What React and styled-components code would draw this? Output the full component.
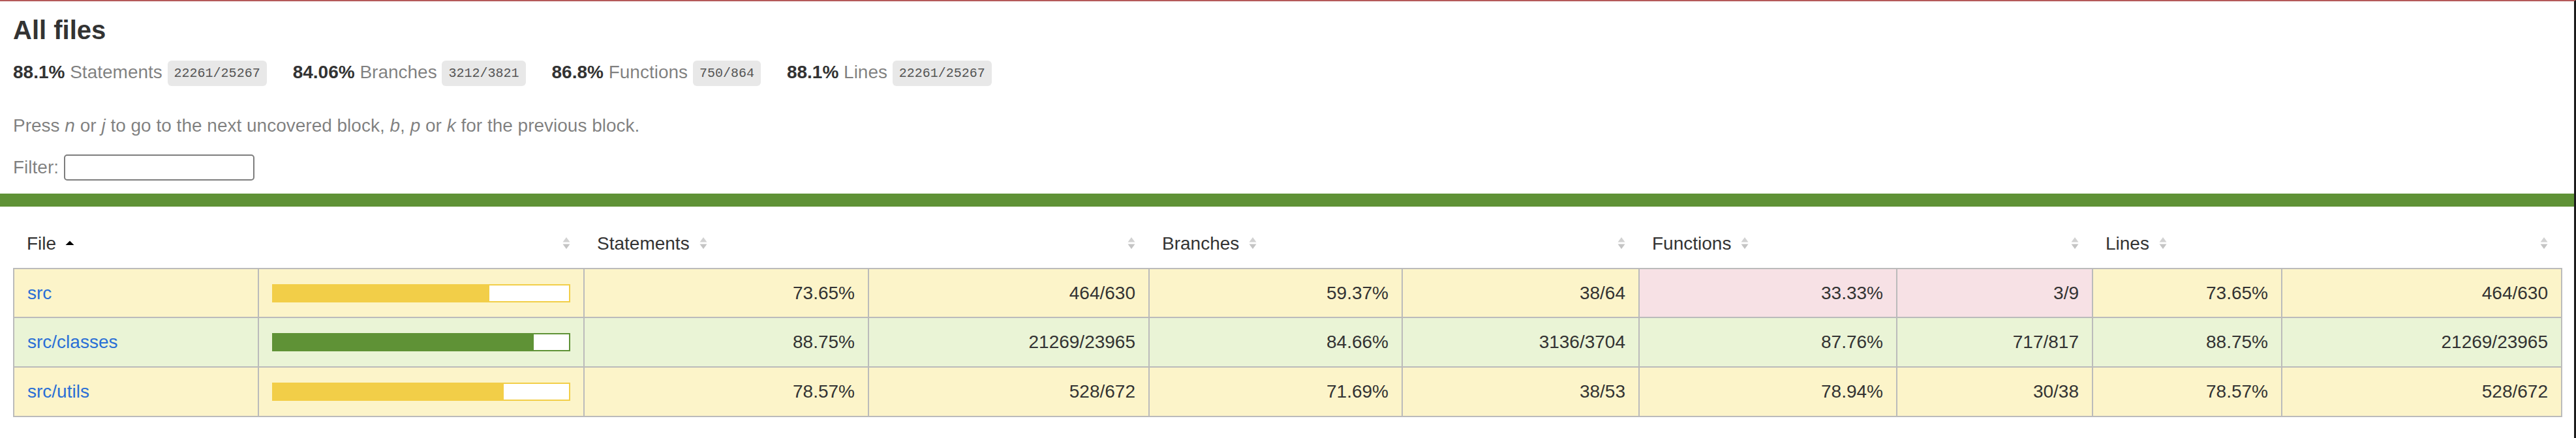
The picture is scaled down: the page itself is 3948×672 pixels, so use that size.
import React from 'react';
import styled, { createGlobalStyle } from 'styled-components';

const GlobalStyle = createGlobalStyle`
  html, body { margin: 0; padding: 0; height: 100%; }
  body {
    font-family: "Liberation Sans", Arial, Helvetica, sans-serif;
    font-size: 28px;
    line-height: 1.2;
    color: #333;
    background: #fff;
  }
  *, *::before, *::after { box-sizing: border-box; }
`;

const COLORS = {
  medium: { bg: '#fcf4c9', fill: '#f2ce48' },
  high: { bg: '#eaf4d6', fill: '#5f9236' },
  low: { bg: '#f7e1e5', fill: '#c21f39' },
};

const Frame = styled.div`
  min-height: 100vh;
  border-top: 2px solid #b45a5a;
  border-right: 3px solid #1c1c1c;
`;

const Pad = styled.div`
  padding: 20px;
`;

const Title = styled.h1`
  font-size: 40px;
  margin: 0;
  font-weight: bold;
`;

const Summary = styled.div`
  display: flex;
`;

const SummaryItem = styled.div`
  padding: 24px 40px 20px 0;
`;

const Strong = styled.span`
  font-weight: bold;
`;

const Quiet = styled.span`
  color: rgba(0, 0, 0, 0.5);
`;

const Fraction = styled.span`
  font-family: "Liberation Mono", Consolas, monospace;
  font-size: 20px;
  color: #555;
  background: #e8e8e8;
  padding: 8px 10px;
  border-radius: 6px;
  vertical-align: middle;
`;

const Hint = styled.p`
  margin: 28px 0;
  color: rgba(0, 0, 0, 0.5);
`;

const FilterRow = styled.div`
  color: rgba(0, 0, 0, 0.5);
`;

const SearchInput = styled.input`
  width: 292px;
  height: 40px;
  font-size: 26px;
  font-family: inherit;
  border: 2px solid #7d7d7d;
  border-radius: 5px;
  padding: 2px 4px;
  background: #fff;
`;

const StatusLine = styled.div`
  height: 20px;
  background: ${(p) => COLORS[p.$level].fill};
`;

const Table = styled.table`
  border-collapse: collapse;
  width: 100%;
  table-layout: fixed;
  margin: 0;
  padding: 0;
`;

const HeadRow = styled.tr`
  border-bottom: 2px solid #bbb;
`;

const Th = styled.th`
  padding: 20px;
  text-align: ${(p) => p.$align || 'left'};
  font-weight: normal;
  white-space: nowrap;
`;

const Body = styled.tbody`
  border: 2px solid #bbb;
`;

const Row = styled.tr`
  border-bottom: 2px solid #bbb;
`;

const Td = styled.td`
  padding: 20px;
  border-right: 2px solid #bbb;
  background: ${(p) => COLORS[p.$level].bg};
  text-align: ${(p) => p.$align || 'left'};
  white-space: nowrap;
  &:last-child { border-right: none; }
`;

const FileLink = styled.a`
  color: #2a6fd6;
  text-decoration: none;
`;

const Chart = styled.div`
  line-height: 0;
  border: 2px solid ${(p) => COLORS[p.$level].fill};
`;

const CoverFill = styled.div`
  display: inline-block;
  height: 24px;
  background: ${(p) => COLORS[p.$level].fill};
`;

const CoverEmpty = styled.div`
  display: inline-block;
  height: 24px;
  background: #fff;
`;

const SorterBox = styled.span`
  display: inline-block;
  width: 14px;
  height: 20px;
  margin-left: 14px;
  svg { display: block; }
`;

function Sorter({ sorted }) {
  return (
    <SorterBox>
      <svg width="14" height="20" viewBox="0 0 14 20">
        {sorted ? (
          <path d="M7 6.5 L13.5 13 L0.5 13 Z" fill="#000" />
        ) : (
          <>
            <path d="M7 1 L12.5 8.5 L1.5 8.5 Z" fill="#d2d2d2" />
            <path d="M1.5 11.5 L12.5 11.5 L7 19 Z" fill="#c4c4c4" />
          </>
        )}
      </svg>
    </SorterBox>
  );
}

const COL_WIDTHS = [375, 499, 436, 430, 388, 363, 395, 300, 290, 429];

const summary = [
  { pct: '88.1%', label: 'Statements', frac: '22261/25267' },
  { pct: '84.06%', label: 'Branches', frac: '3212/3821' },
  { pct: '86.8%', label: 'Functions', frac: '750/864' },
  { pct: '88.1%', label: 'Lines', frac: '22261/25267' },
];

const rows = [
  {
    file: 'src',
    level: 'medium',
    pct: 73.65,
    metrics: [
      ['73.65%', '464/630', 'medium'],
      ['59.37%', '38/64', 'medium'],
      ['33.33%', '3/9', 'low'],
      ['73.65%', '464/630', 'medium'],
    ],
  },
  {
    file: 'src/classes',
    level: 'high',
    pct: 88.75,
    metrics: [
      ['88.75%', '21269/23965', 'high'],
      ['84.66%', '3136/3704', 'high'],
      ['87.76%', '717/817', 'high'],
      ['88.75%', '21269/23965', 'high'],
    ],
  },
  {
    file: 'src/utils',
    level: 'medium',
    pct: 78.57,
    metrics: [
      ['78.57%', '528/672', 'medium'],
      ['71.69%', '38/53', 'medium'],
      ['78.94%', '30/38', 'medium'],
      ['78.57%', '528/672', 'medium'],
    ],
  },
];

const headers = ['Statements', 'Branches', 'Functions', 'Lines'];

export default function App() {
  return (
    <>
      <GlobalStyle />
      <Frame>
        <Pad>
          <Title>All files</Title>
          <Summary>
            {summary.map((s) => (
              <SummaryItem key={s.label}>
                <Strong>{s.pct} </Strong>
                <Quiet>{s.label}</Quiet>{' '}
                <Fraction>{s.frac}</Fraction>
              </SummaryItem>
            ))}
          </Summary>
          <Hint>
            Press <em>n</em> or <em>j</em> to go to the next uncovered block, <em>b</em>,{' '}
            <em>p</em> or <em>k</em> for the previous block.
          </Hint>
          <FilterRow>
            Filter: <SearchInput type="search" />
          </FilterRow>
        </Pad>
        <StatusLine $level="high" />
        <Pad>
          <Table>
            <colgroup>
              {COL_WIDTHS.map((w, i) => (
                <col key={i} style={{ width: w }} />
              ))}
            </colgroup>
            <thead>
              <HeadRow>
                <Th>
                  File
                  <Sorter sorted />
                </Th>
                <Th $align="right">
                  <Sorter />
                </Th>
                {headers.map((h) => (
                  <React.Fragment key={h}>
                    <Th>
                      {h}
                      <Sorter />
                    </Th>
                    <Th $align="right">
                      <Sorter />
                    </Th>
                  </React.Fragment>
                ))}
              </HeadRow>
            </thead>
            <Body>
              {rows.map((r) => {
                const fill = Math.floor(r.pct);
                return (
                  <Row key={r.file}>
                    <Td $level={r.level}>
                      <FileLink href="#">{r.file}</FileLink>
                    </Td>
                    <Td $level={r.level}>
                      <Chart $level={r.level}>
                        <CoverFill $level={r.level} style={{ width: `${fill}%` }} />
                        <CoverEmpty style={{ width: `${100 - fill}%` }} />
                      </Chart>
                    </Td>
                    {r.metrics.map(([p, a, lv], i) => (
                      <React.Fragment key={i}>
                        <Td $level={lv} $align="right">{p}</Td>
                        <Td $level={lv} $align="right">{a}</Td>
                      </React.Fragment>
                    ))}
                  </Row>
                );
              })}
            </Body>
          </Table>
        </Pad>
      </Frame>
    </>
  );
}
